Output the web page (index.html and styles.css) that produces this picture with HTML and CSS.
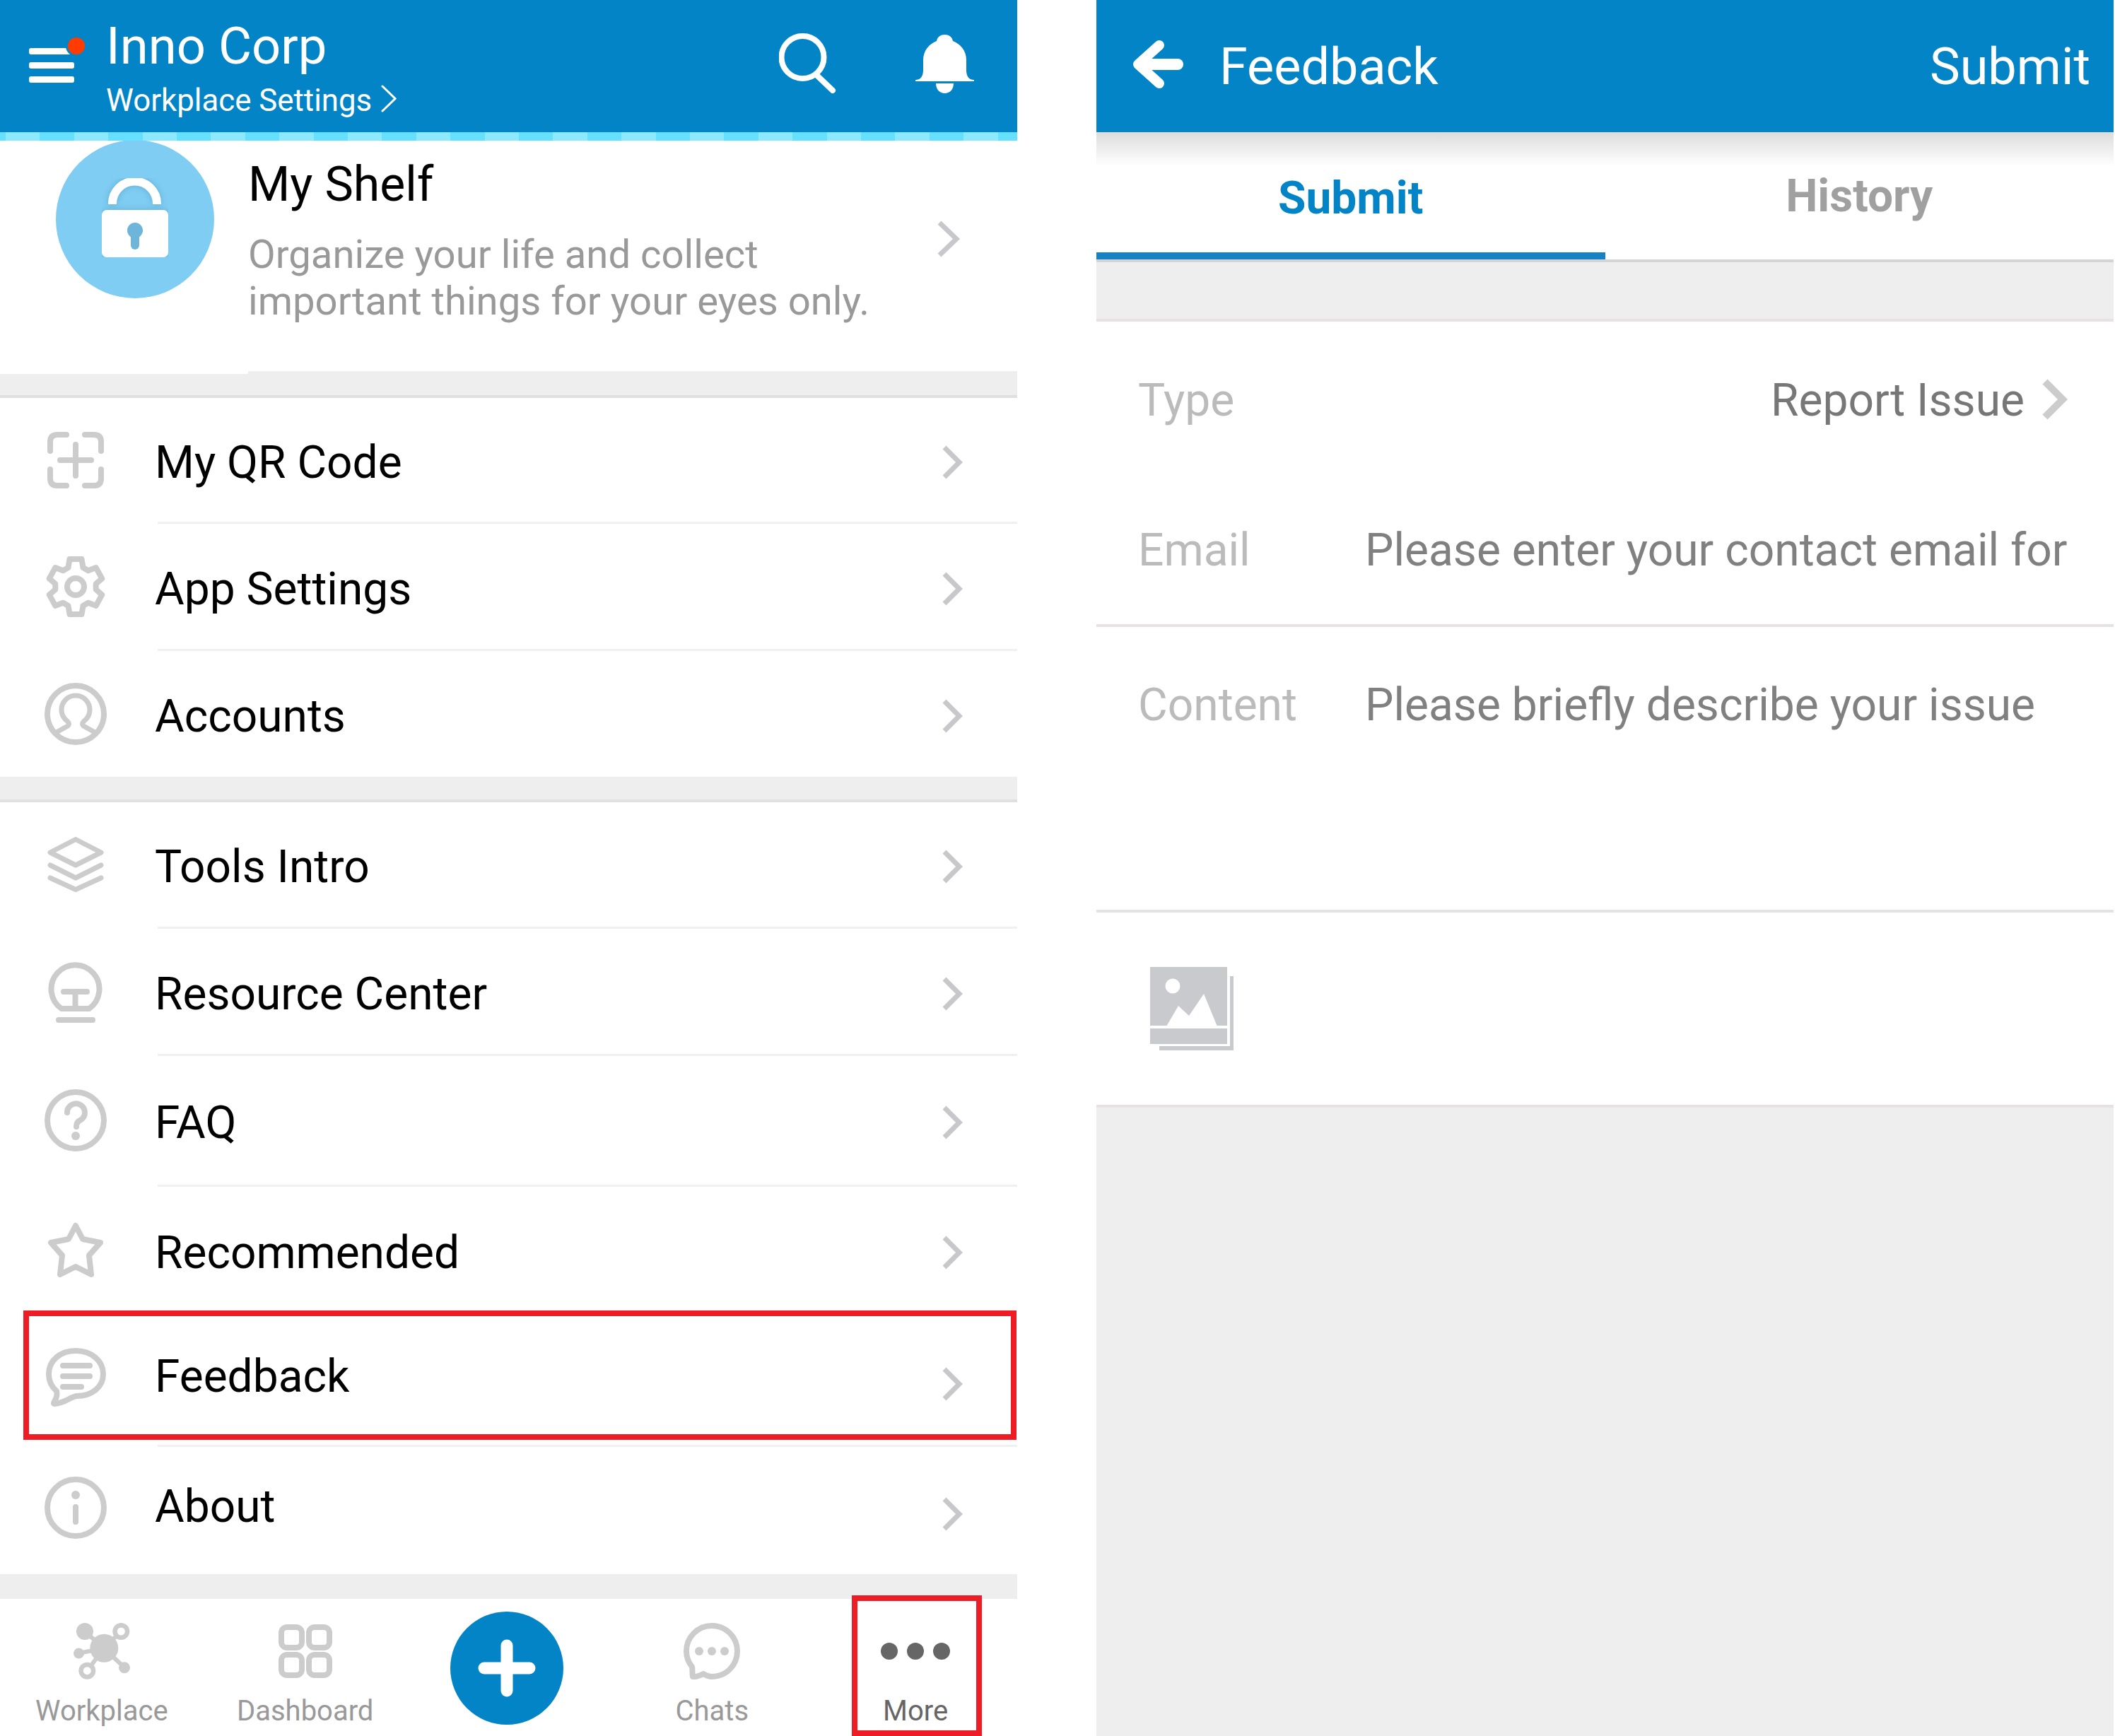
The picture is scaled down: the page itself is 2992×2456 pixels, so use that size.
FILE: index.html
```html
<!DOCTYPE html>
<html lang="en">
<head>
<meta charset="utf-8">
<title>Feedback</title>
<link rel="stylesheet" href="styles.css">
</head>
<body>
<div class="page">
  <section class="panel-left">
    <header class="top">
      <svg class="burger" width="80" height="65" viewBox="0 0 80 65">
        <rect x="0" y="15" width="60" height="9" rx="3" fill="#fff"/>
        <rect x="0" y="35" width="64" height="9" rx="3" fill="#fff"/>
        <rect x="0" y="55" width="64" height="9" rx="3" fill="#fff"/>
        <circle cx="67" cy="12" r="15" fill="#0284c6"/>
        <circle cx="67" cy="12" r="12" fill="#ff3b00"/>
      </svg>
      <div class="brand">
        <div class="brand-name">Inno Corp</div>
        <div class="brand-sub">Workplace Settings
          <svg class="brand-chev" width="22" height="39" viewBox="0 0 22 39"><path d="M2 2 L20 19.5 L2 37" fill="none" stroke="#fff" stroke-width="3" stroke-linecap="round"/></svg>
        </div>
      </div>
      <svg class="search" width="82" height="86" viewBox="0 0 82 86"><circle cx="33.5" cy="34" r="30" fill="none" stroke="#fff" stroke-width="8"/><path d="M54 60 L76 81" stroke="#fff" stroke-width="8" stroke-linecap="round"/></svg>
      <svg class="bell" width="84" height="84" viewBox="0 0 84 84"><path fill="#fff" d="M0 66 V64 C8 64 11 58 11 50 V36 C11 22 20 13 30 9 C31 3 36 0 41.5 0 C47 0 52 3 53 9 C63 13 72 22 72 36 V50 C72 58 75 64 83 64 V66 Z"/><path fill="#fff" d="M29 69 H54 C54 78 48 83 41.500 83 C35 83 29 78 29 69 Z"/></svg>
    </header>
    <div class="stripe"></div>

    <div class="shelf">
      <div class="shelf-badge">
        <svg width="94" height="112" viewBox="0 0 94 112"><g class="lock"><path d="M15 37 V36 A 31.500 31.500 0 0 1 78 36 V37" fill="none" stroke="#fff" stroke-width="12"/><rect x="0" y="45" width="94" height="67" rx="7" fill="#fff"/><circle cx="47" cy="74" r="11" fill="#6db5d9"/><path d="M47 78 V95" stroke="#6db5d9" stroke-width="12" stroke-linecap="round"/></g></svg>
      </div>
      <div class="shelf-text">
        <div class="shelf-title">My Shelf</div>
        <div class="shelf-desc">Organize your life and collect<br>important things for your eyes only.</div>
      </div>
      <svg class="chev chev-shelf" width="34" height="54" viewBox="0 0 34 54"><path d="M4 4 L28 27 L4 50"/></svg>
    </div>
    <div class="band band-notch"></div>

    <div class="row row-a">
      <div class="icon-cell"><svg width="80" height="80" viewBox="0 0 80 80" class="ico"><path d="M4 27 V14 Q4 4 14 4 H27 M53 4 H66 Q76 4 76 14 V27 M76 53 V66 Q76 76 66 76 H53 M27 76 H14 Q4 76 4 66 V53 M18 40 H62 M40 18 V62"/></svg></div>
      <span class="label">My QR Code</span><svg class="chev" width="30" height="50" viewBox="0 0 30 50"><path d="M4 4 L25 25 L4 46"/></svg>
    </div>
    <div class="sep"></div>
    <div class="row row-b">
      <div class="icon-cell"><svg width="88" height="88" viewBox="0 0 88 88" class="ico"><g transform="translate(44 44)"><path d="M-10.500 -27 L-8.500 -39 L8.500 -39 L10.500 -27 L17.800 -22.800 L28.800 -26.900 L37.300 -11.400 L28.700 -3.900 L28.700 3.900 L37.300 11.400 L28.800 26.900 L17.800 22.800 L10.500 27 L8.500 39 L-8.500 39 L-10.500 27 L-17.800 22.800 L-28.800 26.900 L-37.300 11.400 L-28.700 3.900 L-28.700 -3.900 L-37.300 -11.400 L-28.800 -26.900 L-17.800 -22.800 Z"/><circle r="12"/></g></svg></div>
      <span class="label">App Settings</span><svg class="chev" width="30" height="50" viewBox="0 0 30 50"><path d="M4 4 L25 25 L4 46"/></svg>
    </div>
    <div class="sep"></div>
    <div class="row row-c">
      <div class="icon-cell"><svg width="88" height="88" viewBox="0 0 88 88" class="ico"><circle cx="44" cy="44" r="40"/><path stroke-width="7" d="M15 71 L33 61 Q36 58 32 54 A 20 20 0 1 1 56 54 Q52 58 55 61 L73 71"/></svg></div>
      <span class="label">Accounts</span><svg class="chev" width="30" height="50" viewBox="0 0 30 50"><path d="M4 4 L25 25 L4 46"/></svg>
    </div>
    <div class="band band-short"></div>

    <div class="row row-d">
      <div class="icon-cell"><svg width="80" height="78" viewBox="0 0 80 78" class="ico"><path stroke-width="7" d="M40 3.500 L76 22 L40 40 L4 22 Z M4 40 L40 58 L76 40 M4 58 L40 74.500 L76 58"/></svg></div>
      <span class="label">Tools Intro</span><svg class="chev" width="30" height="50" viewBox="0 0 30 50"><path d="M4 4 L25 25 L4 46"/></svg>
    </div>
    <div class="sep"></div>
    <div class="row row-b">
      <div class="icon-cell"><svg width="78" height="88" viewBox="0 0 78 88" class="ico"><path d="M19 68 A34 34 0 1 1 58 68 Z M22 44 H55 M38.500 44 V68 M15 84 H63"/></svg></div>
      <span class="label">Resource Center</span><svg class="chev" width="30" height="50" viewBox="0 0 30 50"><path d="M4 4 L25 25 L4 46"/></svg>
    </div>
    <div class="sep"></div>
    <div class="row row-e">
      <div class="icon-cell"><svg width="88" height="88" viewBox="0 0 88 88" class="ico"><circle cx="44" cy="44" r="40"/><path d="M32 33 A12.500 12.500 0 1 1 51 43.500 Q45 46 45 53"/><circle class="fill" cx="44" cy="66" r="6"/></svg></div>
      <span class="label">FAQ</span><svg class="chev" width="30" height="50" viewBox="0 0 30 50"><path d="M4 4 L25 25 L4 46"/></svg>
    </div>
    <div class="sep"></div>
    <div class="row row-f">
      <div class="icon-cell"><svg width="80" height="80" viewBox="0 0 80 80" class="ico"><path d="M40 5 L50 24 L75 29 L59 47 L62 74 L40 63 L18 74 L21 47 L5 29 L30 24 Z"/></svg></div>
      <span class="label">Recommended</span><svg class="chev" width="30" height="50" viewBox="0 0 30 50"><path d="M4 4 L25 25 L4 46"/></svg>
    </div>
    <div class="sep"></div>
    <div class="row row-e row-low">
      <div class="icon-cell"><svg width="85" height="84" viewBox="0 0 85 84" class="ico"><path d="M42 4 C64 4 81 18 81 37 C81 56 64 68 44 68 C36 68 28 78 12 79 C8 78 18 72 15 61 C8 55 4 47 4 37 C4 18 20 4 42 4 Z M24 25 H62 M24 40 H62 M24 55 H50"/></svg></div>
      <span class="label">Feedback</span><svg class="chev" width="30" height="50" viewBox="0 0 30 50"><path d="M4 4 L25 25 L4 46"/></svg>
    </div>
    <div class="sep"></div>
    <div class="row row-f row-low">
      <div class="icon-cell"><svg width="88" height="88" viewBox="0 0 88 88" class="ico"><circle cx="44" cy="44" r="40"/><circle class="fill" cx="44" cy="26" r="6"/><path d="M44 43 V64"/></svg></div>
      <span class="label">About</span><svg class="chev" width="30" height="50" viewBox="0 0 30 50"><path d="M4 4 L25 25 L4 46"/></svg>
    </div>
    <div class="band band-nav"></div>

    <nav class="nav">
      <div class="nav-item">
        <div class="nav-icon"><svg width="80" height="80" viewBox="0 0 80 80" fill="#ccc"><path d="M43 36 L16 12 M43 36 L67 12 M43 36 L7 43 M43 36 L19 68 M43 36 L72 63" stroke="#ccc" stroke-width="6"/><circle cx="43.300" cy="35.700" r="20"/><circle cx="16" cy="12" r="12"/><circle cx="67.300" cy="12" r="12"/><circle cx="67.300" cy="12" r="5.500" fill="#fff"/><circle cx="7.500" cy="43" r="7.500"/><circle cx="19.300" cy="67.700" r="12"/><circle cx="19.300" cy="67.700" r="5.500" fill="#fff"/><circle cx="72" cy="63.300" r="8"/></svg></div>
        <span class="nav-label">Workplace</span>
      </div>
      <div class="nav-item">
        <div class="nav-icon"><svg width="76" height="76" viewBox="0 0 76 76" fill="none" stroke="#ccc" stroke-width="8"><rect x="4" y="4" width="29" height="29" rx="8"/><rect x="43" y="4" width="29" height="29" rx="8"/><rect x="4" y="43" width="29" height="29" rx="8"/><rect x="43" y="43" width="29" height="29" rx="8"/></svg></div>
        <span class="nav-label">Dashboard</span>
      </div>
      <div class="nav-item">
        <div class="plus"><svg width="82" height="82" viewBox="0 0 82 82"><path d="M9 41 H73 M41 9 V73" stroke="#fff" stroke-width="17" stroke-linecap="round" fill="none"/></svg></div>
      </div>
      <div class="nav-item">
        <div class="nav-icon"><svg width="80" height="80" viewBox="0 0 80 80"><path fill="none" stroke="#ccc" stroke-width="8" stroke-linejoin="round" d="M40 4 C60 4 76 20 76 40 C76 60 60 76 40 76 C35 76 31 74 28 72 C24 74 18 77 13 76 C12 72 13 66 12 62 C7 56 4 48 4 40 C4 20 20 4 40 4 Z"/><circle cx="22" cy="40" r="6" fill="#ccc"/><circle cx="40" cy="40" r="6" fill="#ccc"/><circle cx="58" cy="40" r="6" fill="#ccc"/></svg></div>
        <span class="nav-label">Chats</span>
      </div>
      <div class="nav-item">
        <div class="nav-icon"><svg width="98" height="24" viewBox="0 0 98 24" fill="#666"><circle cx="12" cy="12" r="12"/><circle cx="49" cy="12" r="12"/><circle cx="86" cy="12" r="12"/></svg></div>
        <span class="nav-label nav-label-on">More</span>
      </div>
    </nav>
    <div class="mark mark-row"></div>
    <div class="mark mark-nav"></div>
  </section>

  <section class="panel-right">
    <header class="fb-top">
      <svg class="back" width="72" height="68" viewBox="0 0 72 68"><path d="M38 7 L8 34 L38 61" fill="none" stroke="#fff" stroke-width="14" stroke-linecap="round" stroke-linejoin="round"/><path d="M12 34 H64" stroke="#fff" stroke-width="16" stroke-linecap="round"/></svg>
      <span class="fb-title">Feedback</span>
      <span class="fb-action">Submit</span>
    </header>
    <div class="tabs">
      <div class="tab tab-on">Submit</div>
      <div class="tab">History</div>
    </div>
    <div class="band fb-band"></div>
    <div class="form">
      <div class="f-row f-type">
        <span class="f-label">Type</span>
        <span class="f-value">Report Issue</span>
        <svg class="f-chev" width="38" height="60" viewBox="0 0 38 60"><path d="M6 5 L31 30 L6 55" fill="none" stroke="#ccc" stroke-width="10"/></svg>
      </div>
      <div class="f-row f-email">
        <span class="f-label">Email</span>
        <span class="f-input">Please enter your contact email for</span>
      </div>
      <div class="f-row f-content">
        <span class="f-label">Content</span>
        <span class="f-input">Please briefly describe your issue</span>
      </div>
      <div class="f-attach">
        <svg width="118" height="118" viewBox="0 0 118 118" fill="#c9cacd"><rect width="109" height="83"/><rect y="87" width="109" height="22"/><path d="M113 13 H118 V118 H13 V112 H113 Z"/><circle cx="32" cy="27" r="10.500" fill="#fff"/><path fill="#fff" d="M23 84 L40 55 L55 69 L76 38 L95 84 Z"/></svg>
      </div>
    </div>
    <div class="fb-rest"></div>
  </section>
</div>
</body>
</html>
```
FILE: styles.css
```css
* { box-sizing: border-box; }
html, body { margin: 0; padding: 0; background: #fff; }
body { font-family: Roboto, "Liberation Sans", sans-serif; color: #000; }
.page { display: flex; width: 2992px; height: 2456px; overflow: hidden; }

/* left phone */
.panel-left { position: relative; flex: 0 0 1439px; display: flex; flex-direction: column; height: 2456px; }
.top { display: flex; align-items: flex-start; height: 187px; padding-left: 41px; background: #0284c6; color: #fff; }
.burger { margin-top: 53px; flex: none; }
.brand { margin-left: 29px; padding-top: 24px; }
.brand-name { font-size: 72.4px; line-height: 84px; margin-bottom: 8px; }
.brand-sub { font-size: 43.8px; line-height: 52px; display: flex; align-items: center; }
.brand-chev { margin-left: 13px; margin-top: -6px; }
.search { margin-left: auto; margin-top: 47px; flex: none; }
.bell { margin-left: 111px; margin-right: 60px; margin-top: 49px; flex: none; }
.stripe { height: 12px; background: repeating-linear-gradient(90deg, #8ce9ff 0 48.4px, #66e0ff 48.4px 96.8px); background-position: 8px 0; }

.shelf { display: flex; align-items: flex-start; height: 326px; padding-left: 79px; overflow: hidden; }
.shelf-badge { flex: none; width: 224px; height: 224px; margin-top: -1px; border-radius: 50%; background: #7fcdf3; display: flex; justify-content: center; padding-top: 54px; }
.lock { filter: drop-shadow(0 0 4px rgba(60, 130, 170, .45)); }
.shelf-text { margin-left: 48px; padding-top: 24px; }
.shelf-title { font-size: 68px; line-height: 76px; margin-bottom: 28px; }
.shelf-desc { font-size: 56.25px; line-height: 66px; color: #999; }

.band { background: #eee; }
.band-notch { height: 38px; border-bottom: 4px solid #e0e0e0; background: #eee linear-gradient(#fff, #fff) no-repeat 0 0 / 351px 4px; }
.band-short { height: 36px; border-bottom: 4px solid #e0e0e0; }
.band-nav { height: 35px; }

.row { display: flex; align-items: center; }
.row-a { height: 175px; }
.row-b { height: 177px; }
.row-c { height: 178px; }
.row-d { height: 176px; }
.row-e { height: 182px; }
.row-f { height: 180px; }
.icon-cell { flex: 0 0 214px; display: flex; justify-content: center; align-items: center; }
.ico { fill: none; stroke: #ccc; stroke-width: 8; stroke-linecap: round; stroke-linejoin: round; }
.ico .fill { fill: #ccc; stroke: none; }
.label { margin-left: 5px; font-size: 64px; line-height: 76px; padding-top: 8px; }
.chev { margin-left: auto; margin-right: 77px; margin-top: 6px; flex: none; }
.chev path { fill: none; stroke: #c8c8cc; stroke-width: 7; }
.shelf .chev-shelf { margin-right: 80px; margin-top: 112px; }
.row-low .icon-cell { margin-bottom: 8px; }
.row-low .label { padding-top: 0; padding-bottom: 11px; }
.row-low .chev { margin-top: 10px; }
.sep { height: 3px; margin-left: 223px; background: #f0f0f0; }

.nav { flex: 1; display: flex; }
.nav-item { flex: 1; display: flex; flex-direction: column; align-items: center; padding-top: 34px; }
.nav-icon { height: 80px; display: flex; align-items: center; justify-content: center; }
.nav-label { margin-top: 21px; font-size: 40px; line-height: 48px; color: #999; }
.nav-label-on { color: #666; }
.plus { width: 160px; height: 160px; margin-top: -16px; margin-left: -5px; border-radius: 50%; background: #0284c6; display: flex; align-items: center; justify-content: center; }
.mark { position: absolute; border: 8px solid #ee1c25; }
.mark-row { left: 33px; top: 1854px; width: 1405px; height: 183px; }
.mark-nav { left: 1205px; top: 2257px; width: 184px; height: 199px; }

/* right phone */
.panel-right { flex: 0 0 1439px; margin-left: 112px; display: flex; flex-direction: column; height: 2456px; }
.fb-top { display: flex; align-items: center; height: 187px; padding: 2px 33px 0 51px; background: #0284c6; color: #fff; }
.back { margin-top: -7px; flex: none; }
.fb-title { margin-left: 51px; font-size: 72px; line-height: 84px; }
.fb-action { margin-left: auto; font-size: 72px; line-height: 84px; }
.tabs { display: flex; height: 184px; border-bottom: 4px solid #d4d4d4; background: linear-gradient(#dcdcdc, #fff 48px); }
.tab { flex: 1; display: flex; align-items: center; justify-content: center; height: 180px; font-size: 64px; font-weight: 700; color: #a0a0a0; }
.tab-on { color: #0284c6; border-bottom: 10px solid #1482c5; padding-top: 16px; }
.fb-band { height: 84px; border-bottom: 4px solid #e6e2e2; }
.form { display: flex; flex-direction: column; }
.f-row { display: flex; align-items: center; padding-left: 59px; font-size: 64.1px; line-height: 76px; }
.f-type { height: 220px; padding-top: 4px; }
.f-email { height: 212px; padding-top: 0; border-bottom: 4px solid #e6e2e2; }
.f-content { height: 404px; align-items: flex-start; padding-top: 73px; border-bottom: 4px solid #e6e2e2; }
.f-label { flex: 0 0 321px; color: #bbb; }
.f-value { margin-left: auto; color: #777; }
.f-chev { margin: -4px 65px 0 23px; flex: none; }
.f-input { color: #808080; white-space: nowrap; }
.f-attach { display: flex; align-items: center; height: 276px; padding-left: 76px; border-bottom: 4px solid #e6e2e2; }
.fb-rest { flex: 1; background: #eee; }
```
